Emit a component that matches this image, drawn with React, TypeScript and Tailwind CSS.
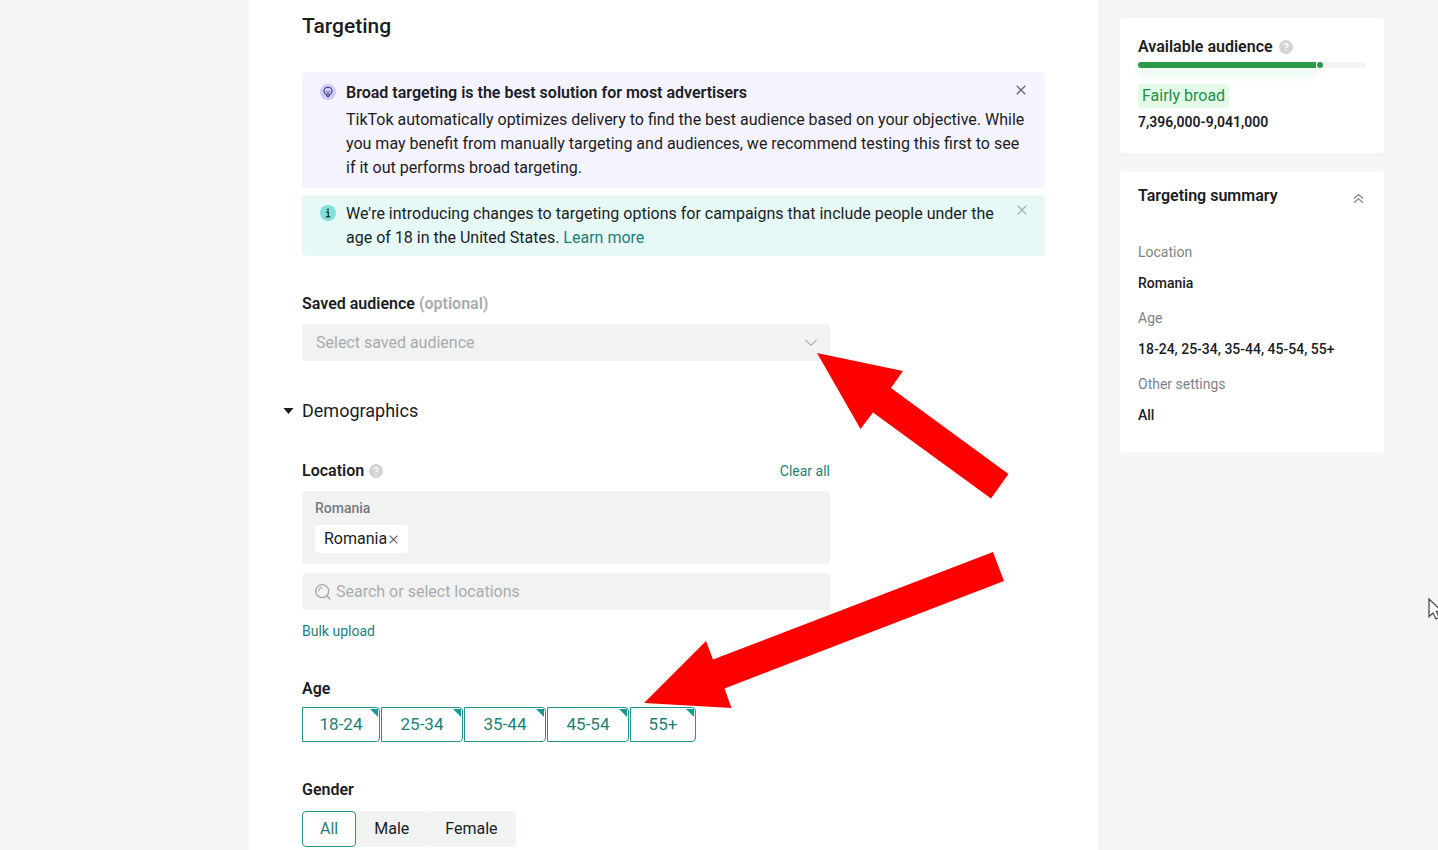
import { useState } from 'react';

const AGE_RANGES = ['18-24', '25-34', '35-44', '45-54', '55+'];
const GENDERS = ['All', 'Male', 'Female'];

const SUMMARY = [
  { label: 'Location', value: 'Romania' },
  { label: 'Age', value: '18-24, 25-34, 35-44, 45-54, 55+' },
  { label: 'Other settings', value: 'All' },
];

const fieldBg = 'bg-[#f1f3f3]';
const fieldLabel = 'text-base leading-6 font-semibold';
const link = 'text-[#1b7f7a]';

function CloseIcon({ size = 10, strokeWidth = 1.4 }: { size?: number; strokeWidth?: number }) {
  return (
    <svg width={size} height={size} viewBox="0 0 10 10" fill="none" stroke="currentColor" strokeWidth={strokeWidth}>
      <path d="M0.7 0.7 9.3 9.3M9.3 0.7 0.7 9.3" />
    </svg>
  );
}

function HelpIcon() {
  return (
    <svg width="14" height="14" viewBox="0 0 14 14" fill="none">
      <circle cx="7" cy="7" r="7" fill="#d3d4d5" />
      <path d="M5 5.6C5 4.3 5.9 3.6 7 3.6S9 4.3 9 5.4C9 6.7 7 6.8 7 8.3" stroke="#fff" strokeWidth="1.3" />
      <circle cx="7" cy="10.2" r="0.8" fill="#fff" />
    </svg>
  );
}

function BulbIcon() {
  return (
    <svg width="16" height="16" viewBox="0 0 16 16" fill="none" className="shrink-0">
      <circle cx="8" cy="8" r="8" fill="#cfcbf8" />
      <path d="M6.2 10.6C4.9 9.9 4 8.8 4 7.3a4 4 0 0 1 8 0c0 1.5-.9 2.6-2.2 3.3L8 13Z" stroke="#38355f" strokeWidth="1.1" strokeLinejoin="round" />
      <path d="M6.6 7.2 8 8.6 9.4 7.2M8 8.6V11" stroke="#38355f" strokeWidth="1" />
    </svg>
  );
}

function InfoIcon() {
  return (
    <svg width="16" height="16" viewBox="0 0 16 16" fill="none" className="shrink-0">
      <circle cx="8" cy="8" r="8" fill="#82e0d8" />
      <circle cx="8" cy="4.5" r="1.1" fill="#123f3d" />
      <path d="M6.3 7H8.3V11.5M6 11.7H10.2" stroke="#123f3d" strokeWidth="1.4" />
    </svg>
  );
}

function SearchIcon() {
  return (
    <svg width="16" height="16" viewBox="0 0 16 16" fill="none" stroke="#a3a5a6" strokeWidth="1.3" className="shrink-0">
      <circle cx="7.2" cy="7.2" r="6.5" />
      <path d="M3.7 7.2a3.5 3.5 0 0 1 3.5-3.5M11.8 11.8 15.3 15.5" />
    </svg>
  );
}

function AudienceCard() {
  return (
    <section className="rounded bg-white px-[18px] pt-[17px] pb-[21px]">
      <h2 className="flex items-center gap-1.5 text-base leading-6 font-semibold">
        Available audience
        <HelpIcon />
      </h2>
      <div className="mt-[3px] flex h-1.5 items-center rounded-full bg-[#f2f4f4]">
        <div className="h-1.5 w-[78%] rounded-l-full bg-[#2c9a49] shadow-[0_6px_8px_rgba(120,220,150,0.25)]" />
        <div className="ml-px size-1.5 rounded-full bg-[#2c9a49]" />
      </div>
      <div className="mt-4 flex">
        <span className="rounded bg-[#e3fbe6] px-1 text-base leading-6 text-[#21904a]">Fairly broad</span>
      </div>
      <p className="mt-1 text-sm leading-5 font-semibold">7,396,000-9,041,000</p>
    </section>
  );
}

function SummaryCard() {
  return (
    <section className="rounded bg-white px-[18px] pt-[13px] pb-7">
      <div className="mb-[19px] flex items-center justify-between">
        <h2 className="text-base leading-6 font-semibold">Targeting summary</h2>
        <button aria-label="Collapse summary" className="px-0.5 pt-1 text-[#808285]">
          <svg width="11" height="11" viewBox="0 0 11 11" fill="none" stroke="currentColor" strokeWidth="1.2">
            <path d="M1 5.5 5.5 1.5 10 5.5M1 9.7 5.5 5.7 10 9.7" />
          </svg>
        </button>
      </div>
      <dl className="text-sm leading-5">
        {SUMMARY.map((item) => (
          <div key={item.label} className="pt-[15px]">
            <dt className="text-[#808285]">{item.label}</dt>
            <dd className="mt-[11px] font-medium">{item.value}</dd>
          </div>
        ))}
      </dl>
    </section>
  );
}

export default function App() {
  const [ages, setAges] = useState<string[]>(AGE_RANGES);
  const [gender, setGender] = useState('All');

  const toggleAge = (age: string) => {
    setAges((prev) => (prev.includes(age) ? prev.filter((a) => a !== age) : [...prev, age]));
  };

  return (
    <div className="relative grid min-h-screen grid-cols-[249px_minmax(0,1fr)_264px] overflow-hidden bg-[#f5f5f5] pr-[54px] font-[Roboto,sans-serif] text-[#1b1d1f]">
      <main className="col-start-2 mr-[22px] bg-white px-[53px] pt-3">
        <h1 className="text-[21px] leading-7 font-medium">Targeting</h1>

        {/* Notices */}
        <div className="mt-8 flex rounded bg-[#f5f3fe] pt-[9px] pr-[19px] pb-2 pl-[18px]">
          <div className="pt-[3px]">
            <BulbIcon />
          </div>
          <div className="ml-2.5 flex-1 text-base leading-6">
            <div className="mb-[3px] flex justify-between">
              <h2 className="font-semibold">Broad targeting is the best solution for most advertisers</h2>
              <button aria-label="Close tip" className="pb-1.5 text-[#6d6b80]">
                <CloseIcon />
              </button>
            </div>
            <p>
              TikTok automatically optimizes delivery to find the best audience based on your objective. While you may
              benefit from manually targeting and audiences, we recommend testing this first to see if it out performs
              broad targeting.
            </p>
          </div>
        </div>
        <div className="mt-[7px] flex items-start rounded bg-[#e6f9f7] pt-[7px] pr-[18px] pb-1.5 pl-[18px]">
          <div className="pt-[3px]">
            <InfoIcon />
          </div>
          <p className="ml-2.5 flex-1 pr-5 text-base leading-6">
            We're introducing changes to targeting options for campaigns that include people under the age of 18 in the
            United States.{' '}
            <a href="#learn" className={link}>
              Learn more
            </a>
          </p>
          <button aria-label="Close notice" className="pt-[3px] leading-5 text-[#8fa5a5]">
            <CloseIcon strokeWidth={1.1} />
          </button>
        </div>

        <div className="max-w-[528px]">
          {/* Saved audience */}
          <label htmlFor="saved-audience" className={`mt-9 block ${fieldLabel}`}>
            Saved audience <span className="text-[#a9abad]">(optional)</span>
          </label>
          <div className={`mt-2 grid items-center rounded ${fieldBg}`}>
            <select
              id="saved-audience"
              defaultValue=""
              className="col-start-1 row-start-1 h-[37px] w-full appearance-none bg-transparent px-3.5 text-base text-[#a9abad]"
            >
              <option value="">Select saved audience</option>
            </select>
            <svg width="12" height="8" viewBox="0 0 12 8" fill="none" stroke="#b0b2b3" strokeWidth="1.2" className="pointer-events-none col-start-1 row-start-1 mr-[13px] justify-self-end">
              <path d="M0.5 1 6 6.5 11.5 1" />
            </svg>
          </div>

          {/* Demographics */}
          <button className="mt-9 -ml-[19px] flex items-center gap-2 text-lg leading-7">
            <svg width="11" height="6" viewBox="0 0 11 6" fill="currentColor">
              <path d="M0.5 0H10.5L5.5 6Z" />
            </svg>
            Demographics
          </button>

          <div className="mt-[34px] flex items-center justify-between">
            <h3 className={`flex items-center gap-[5px] ${fieldLabel}`}>
              Location
              <HelpIcon />
            </h3>
            <button className={`text-sm leading-5 ${link}`}>Clear all</button>
          </div>
          <div className={`mt-2 rounded px-[13px] pt-[7px] pb-[11px] ${fieldBg}`}>
            <div className="text-sm leading-5 font-medium text-[#77797b]">Romania</div>
            <div className="mt-[7px] flex">
              <span className="flex h-7 items-center gap-0.5 rounded bg-white pr-2.5 pl-[9px] text-base">
                Romania
                <button aria-label="Remove Romania" className="text-[#606264]">
                  <CloseIcon size={9} strokeWidth={1.4} />
                </button>
              </span>
            </div>
          </div>
          <div className={`mt-[9px] flex h-[37px] items-center gap-[5px] rounded px-[13px] ${fieldBg}`}>
            <SearchIcon />
            <input
              aria-label="Search or select locations"
              placeholder="Search or select locations"
              className="min-w-0 flex-1 bg-transparent text-base outline-none placeholder:text-[#a9abad]"
            />
          </div>
          <button className={`mt-[11px] block text-sm leading-5 ${link}`}>Bulk upload</button>

          {/* Age */}
          <h3 className={`mt-9 ${fieldLabel}`}>Age</h3>
          <div className="mt-1.5 grid grid-cols-[78px_82px_82px_82px_66px] gap-px">
            {AGE_RANGES.map((age) => (
              <button
                key={age}
                aria-pressed={ages.includes(age)}
                onClick={() => toggleAge(age)}
                className={`relative h-[35px] rounded-r border text-[17px] ${
                  ages.includes(age) ? 'border-[#25938d] bg-white text-[#1b7f7a]' : 'border-[#f1f3f3] bg-[#f1f3f3]'
                }`}
              >
                {age}
                <svg width="8" height="8" viewBox="0 0 8 8" className="absolute top-px right-px">
                  <path d="M0 0H8V8Z" fill="#169a94" />
                </svg>
              </button>
            ))}
          </div>

          {/* Gender */}
          <h3 className={`mt-9 ${fieldLabel}`}>Gender</h3>
          <div className="mt-[9px] flex">
            {GENDERS.map((item) => (
              <button
                key={item}
                aria-pressed={gender === item}
                onClick={() => setGender(item)}
                className={`h-9 rounded border px-[17px] text-base ${
                  gender === item ? 'border-[#25938d] bg-white text-[#1b7f7a]' : 'border-[#f1f3f3] bg-[#f1f3f3]'
                }`}
              >
                {item}
              </button>
            ))}
          </div>
        </div>
      </main>

      <aside className="flex flex-col gap-[18px] pt-[18px]">
        <AudienceCard />
        <SummaryCard />
      </aside>

      {/* Pointer arrows drawn over the form */}
      <svg width="192" height="146" viewBox="0 0 192 146" className="pointer-events-none absolute top-[353px] left-[817px]">
        <path d="M0 0 86 18 74 35 191.5 121 174 145.5 56 59.5 43.5 76Z" fill="#ff0000" />
      </svg>
      <svg width="360" height="156" viewBox="0 0 360 156" className="pointer-events-none absolute top-[552px] left-[644px]">
        <path d="M0 151 62 89 69 107.5 349 0 360 29 80.5 136.5 87.5 156Z" fill="#ff0000" />
      </svg>
      <svg width="14" height="22" viewBox="0 0 14 22" className="pointer-events-none absolute top-[598px] -right-1">
        <path d="M1 1V18.5L5 15 8 21 11 19.5 8.5 13.5H14Z" fill="#fff" stroke="#4a4b50" strokeWidth="1.3" />
      </svg>
    </div>
  );
}
